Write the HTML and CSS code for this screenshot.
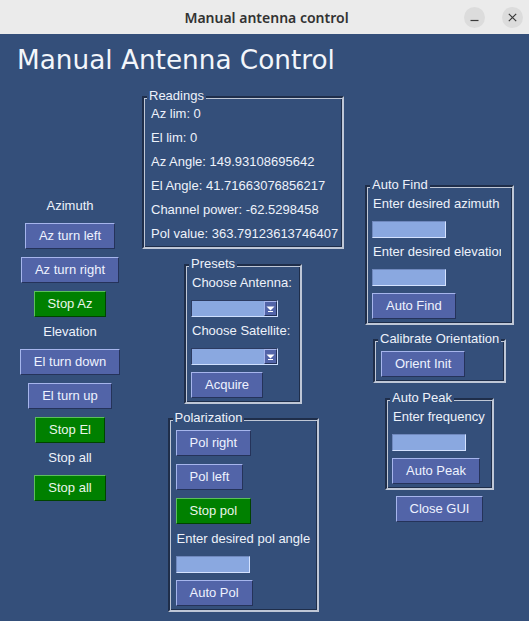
FILE: index.html
```html
<!DOCTYPE html>
<html lang="en">
<head>
<meta charset="utf-8">
<title>Manual antenna control</title>
<link rel="stylesheet" href="styles.css">
</head>
<body>
<div class="window">
  <div class="titlebar">
    <span class="title">Manual antenna control</span>
    <div class="wm-buttons">
      <span class="wm-btn"><svg width="21" height="21" viewBox="0 0 21 21"><line x1="6.5" y1="13.5" x2="14.5" y2="13.5" stroke="#3a3a3a" stroke-width="1.2"/></svg></span>
      <span class="wm-btn"><svg width="21" height="21" viewBox="0 0 21 21"><path d="M6.8 6.8 L14.2 14.2 M14.2 6.8 L6.8 14.2" stroke="#3a3a3a" stroke-width="1.2" fill="none"/></svg></span>
    </div>
  </div>
  <div class="app">
    <h1 class="heading">Manual Antenna Control</h1>
    <div class="columns">
      <div class="col col-motion">
        <div class="label">Azimuth</div>
        <button class="btn">Az turn left</button>
        <button class="btn">Az turn right</button>
        <button class="btn btn-stop">Stop Az</button>
        <div class="label">Elevation</div>
        <button class="btn">El turn down</button>
        <button class="btn">El turn up</button>
        <button class="btn btn-stop">Stop El</button>
        <div class="label">Stop all</div>
        <button class="btn btn-stop">Stop all</button>
      </div>
      <div class="col col-center">
        <div class="frame readings">
          <span class="legend">Readings</span>
          <div class="label row">Az lim: 0</div>
          <div class="label row">El lim: 0</div>
          <div class="label row">Az Angle: 149.93108695642</div>
          <div class="label row">El Angle: 41.71663076856217</div>
          <div class="label row">Channel power: -62.5298458</div>
          <div class="label row">Pol value: 363.79123613746407</div>
        </div>
        <div class="frame presets">
          <span class="legend">Presets</span>
          <div class="label">Choose Antenna:</div>
          <div class="combo"><span class="combo-field"></span><span class="combo-arrow"><svg width="9" height="6" viewBox="0 0 9 6"><path d="M0.5 0.5 H8.5 L4.5 4.5 Z" fill="#ffffff"/><rect x="2" y="5" width="5" height="1" fill="#ffffff"/></svg></span></div>
          <div class="label">Choose Satellite:</div>
          <div class="combo"><span class="combo-field"></span><span class="combo-arrow"><svg width="9" height="6" viewBox="0 0 9 6"><path d="M0.5 0.5 H8.5 L4.5 4.5 Z" fill="#ffffff"/><rect x="2" y="5" width="5" height="1" fill="#ffffff"/></svg></span></div>
          <button class="btn">Acquire</button>
        </div>
        <div class="frame polarization">
          <span class="legend">Polarization</span>
          <button class="btn">Pol right</button>
          <button class="btn">Pol left</button>
          <button class="btn btn-stop">Stop pol</button>
          <div class="label">Enter desired pol angle</div>
          <input class="entry" type="text">
          <button class="btn">Auto Pol</button>
        </div>
      </div>
      <div class="col col-right">
        <div class="frame autofind">
          <span class="legend">Auto Find</span>
          <div class="label clip">Enter desired azimuth</div>
          <input class="entry" type="text">
          <div class="label clip">Enter desired elevation</div>
          <input class="entry" type="text">
          <button class="btn">Auto Find</button>
        </div>
        <div class="frame calibrate">
          <span class="legend">Calibrate Orientation</span>
          <button class="btn">Orient Init</button>
        </div>
        <div class="frame autopeak">
          <span class="legend">Auto Peak</span>
          <div class="label">Enter frequency</div>
          <input class="entry" type="text">
          <button class="btn">Auto Peak</button>
        </div>
        <button class="btn btn-close">Close GUI</button>
      </div>
    </div>
  </div>
</div>
</body>
</html>
```
FILE: styles.css
```css
html, body {
  margin: 0;
  padding: 0;
}
body {
  background: #344f7a;
  font-family: "Liberation Sans", Arial, sans-serif;
  font-size: 13px;
  color: #eef2fa;
}
.window {
  width: 529px;
  height: 621px;
  overflow: hidden;
}
.titlebar {
  height: 34px;
  background: #ebebeb;
  display: grid;
  grid-template-columns: 1fr auto 1fr;
  align-items: center;
}
.title {
  grid-column: 2;
  padding-left: 4px;
  font-family: "Noto Sans", "Open Sans", sans-serif;
  font-weight: 600;
  font-size: 14px;
  color: #323232;
}
.wm-buttons {
  grid-column: 3;
  justify-self: end;
  display: flex;
  gap: 17px;
  margin-right: 6px;
}
.wm-btn {
  width: 21px;
  height: 21px;
  border-radius: 50%;
  background: #dcdcdc;
  display: flex;
}
.heading {
  margin: 11px 0 0 17px;
  font-family: "DejaVu Sans", sans-serif;
  font-weight: normal;
  font-size: 26.3px;
  line-height: 30px;
  color: #f3f6fb;
}
.columns {
  display: flex;
}
.col {
  display: flex;
  flex-direction: column;
  align-items: center;
}
.col-motion {
  width: 140px;
  padding-top: 120px;
}
.col-center {
  width: 206px;
  padding-top: 21px;
}
.col-right {
  width: 179px;
  margin-left: 4px;
  padding-top: 110px;
}
.label {
  height: 24px;
  line-height: 21px;
  padding: 0 1px;
  white-space: nowrap;
}
.label.row {
  line-height: 24px;
}
.label.clip {
  width: 127px;
  overflow: hidden;
}
.btn {
  height: 26px;
  box-sizing: border-box;
  margin: 4px 0;
  padding: 0 13px;
  border: 1px solid;
  border-color: #a6b5ec #25335a #25335a #a6b5ec;
  background: #5264a8;
  color: #eef2ff;
  font-family: inherit;
  font-size: 13px;
  line-height: 24px;
  white-space: nowrap;
}
.btn-stop {
  background: #008000;
  border-color: #5cbf5c #004400 #004400 #5cbf5c;
  color: #eaf6ea;
}
.btn-close {
  margin-top: 6px;
}
.entry {
  display: block;
  width: 74px;
  height: 17px;
  box-sizing: border-box;
  margin: 4px 0 3px;
  padding: 0;
  border: 1px solid;
  border-color: #6f88bd #d4e2ff #d4e2ff #6f88bd;
  background: #8aa8e0;
  outline: none;
}
.combo {
  width: 87px;
  height: 17px;
  box-sizing: border-box;
  margin: 4px 0 3px;
  display: flex;
  border: 1px solid;
  border-color: #2c3b61 #cfe0ff #cfe0ff #2c3b61;
  background: #8aa8e0;
}
.combo-field {
  flex: 1;
}
.combo-arrow {
  width: 13px;
  box-sizing: border-box;
  background: #5264a8;
  border: 1px solid;
  border-color: #a6b5ec #25335a #25335a #a6b5ec;
  display: flex;
  align-items: center;
  justify-content: center;
}
.frame {
  position: relative;
  box-sizing: border-box;
  border: 2px solid;
  border-color: #1f2e4a #bfc7d6 #bfc7d6 #1f2e4a;
  box-shadow: inset 1px 1px 0 #bfc7d6, inset -1px -1px 0 #1f2e4a;
  display: flex;
  flex-direction: column;
  align-items: flex-start;
}
.legend {
  position: absolute;
  top: -10px;
  left: 3px;
  padding: 0 2px;
  line-height: 16px;
  background: #344f7a;
  white-space: nowrap;
}
.readings {
  width: 202px;
  padding: 4px 6px 1px;
}
.presets {
  width: 118px;
  margin-top: 15px;
  padding: 6px 5px 0;
}
.polarization {
  width: 151px;
  margin-top: 14px;
  padding: 6px 6px 0;
}
.autofind {
  width: 149px;
  padding: 6px 5px 0;
}
.calibrate {
  width: 133px;
  margin-top: 14px;
  padding: 6px 6px 0;
}
.autopeak {
  width: 109px;
  margin-top: 15px;
  padding: 6px 5px 0;
}
```
